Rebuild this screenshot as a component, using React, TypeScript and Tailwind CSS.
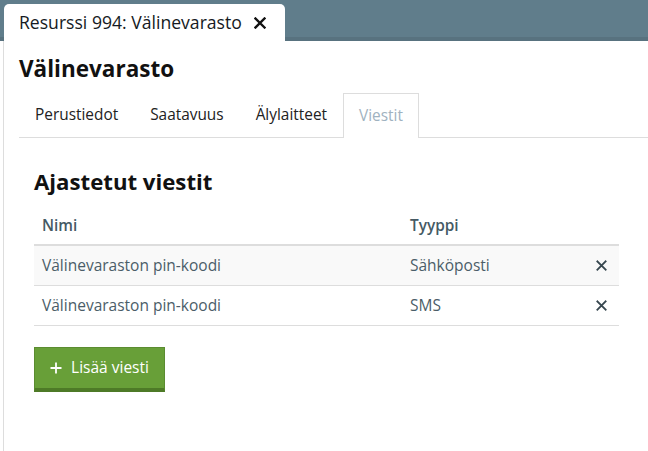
import React from "react";

const XIcon = ({ size = 11, stroke = 2.2, color = "#37474f" }: { size?: number; stroke?: number; color?: string }) => (
  <svg width={size} height={size} viewBox="0 0 12 12" fill="none">
    <path d="M1.5 1.5 L10.5 10.5 M10.5 1.5 L1.5 10.5" stroke={color} strokeWidth={stroke} strokeLinecap="square" />
  </svg>
);

export default function App() {
  const rows = [
    { name: "Välinevaraston pin-koodi", type: "Sähköposti", bg: "bg-[#f9f9f9]" },
    { name: "Välinevaraston pin-koodi", type: "SMS", bg: "bg-white" },
  ];
  return (
    <div className="w-[648px] h-[451px] bg-white overflow-hidden font-['Open_Sans',sans-serif]">
      <div className="h-[41px] bg-[#607d8b] shadow-[inset_0_-4px_0_#58727f] flex items-end pl-[4px]">
        <div className="h-[37px] w-[281px] bg-white rounded-t-[5px] flex items-center pl-[15px]">
          <span className="text-[17.6px] text-[#151a22] leading-none">Resurssi 994: Välinevarasto</span>
          <span className="ml-[12px] mt-[1px]"><XIcon size={12} stroke={2.4} color="#111" /></span>
        </div>
      </div>
      <div className="ml-[3px] border-l border-[#dddddd] h-[410px] pl-[15px]">
        <h1 className="pt-[13px] text-[22.5px] font-bold text-[#111] leading-[30px]">Välinevarasto</h1>
        <div className="mt-[9px] h-[45px] border-b border-[#dddddd] flex items-end">
          {["Perustiedot", "Saatavuus", "Älylaitteet"].map((t) => (
            <div key={t} className="h-[44px] px-[16px] flex items-center text-[15.4px] text-[#222]">
              {t}
            </div>
          ))}
          <div className="h-[45px] -mb-px px-[15px] flex items-center text-[15.4px] text-[#9fb2c0] bg-white border border-b-0 border-[#dddddd]">
            Viestit
          </div>
        </div>
        <div className="pl-[15px] pr-[29px]">
          <h2 className="mt-[29px] text-[22.2px] font-bold text-[#111] leading-[30px]">Ajastetut viestit</h2>
          <div className="mt-[10px]">
            <div className="flex h-[39px] items-center border-b-2 border-[#dddddd] text-[15.4px] font-semibold text-[#455a64]">
              <div className="w-[368px] pl-[8px]">Nimi</div>
              <div className="flex-1 pl-[8px]">Tyyppi</div>
            </div>
            {rows.map((r, i) => (
              <div key={i} className={`flex h-[40px] items-center border-b border-[#dddddd] text-[15.5px] text-[#4b5d68] ${r.bg}`}>
                <div className="w-[368px] pl-[8px]">{r.name}</div>
                <div className="flex-1 pl-[8px]">{r.type}</div>
                <div className="w-[36px] flex justify-center">
                  <XIcon size={11} stroke={2} color="#37474f" />
                </div>
              </div>
            ))}
          </div>
          <button className="mt-[21px] w-[131px] h-[45px] bg-[#689f38] border border-[#5b8c30] border-b-[4px] border-b-[#4e7a27] flex items-center justify-center gap-[9px] text-white text-[15.5px]">
            <svg width="12" height="12" viewBox="0 0 12 12"><path d="M6 0.5 V11.5 M0.5 6 H11.5" stroke="#fff" strokeWidth="1.8" /></svg>
            <span>Lisää viesti</span>
          </button>
        </div>
      </div>
    </div>
  );
}
